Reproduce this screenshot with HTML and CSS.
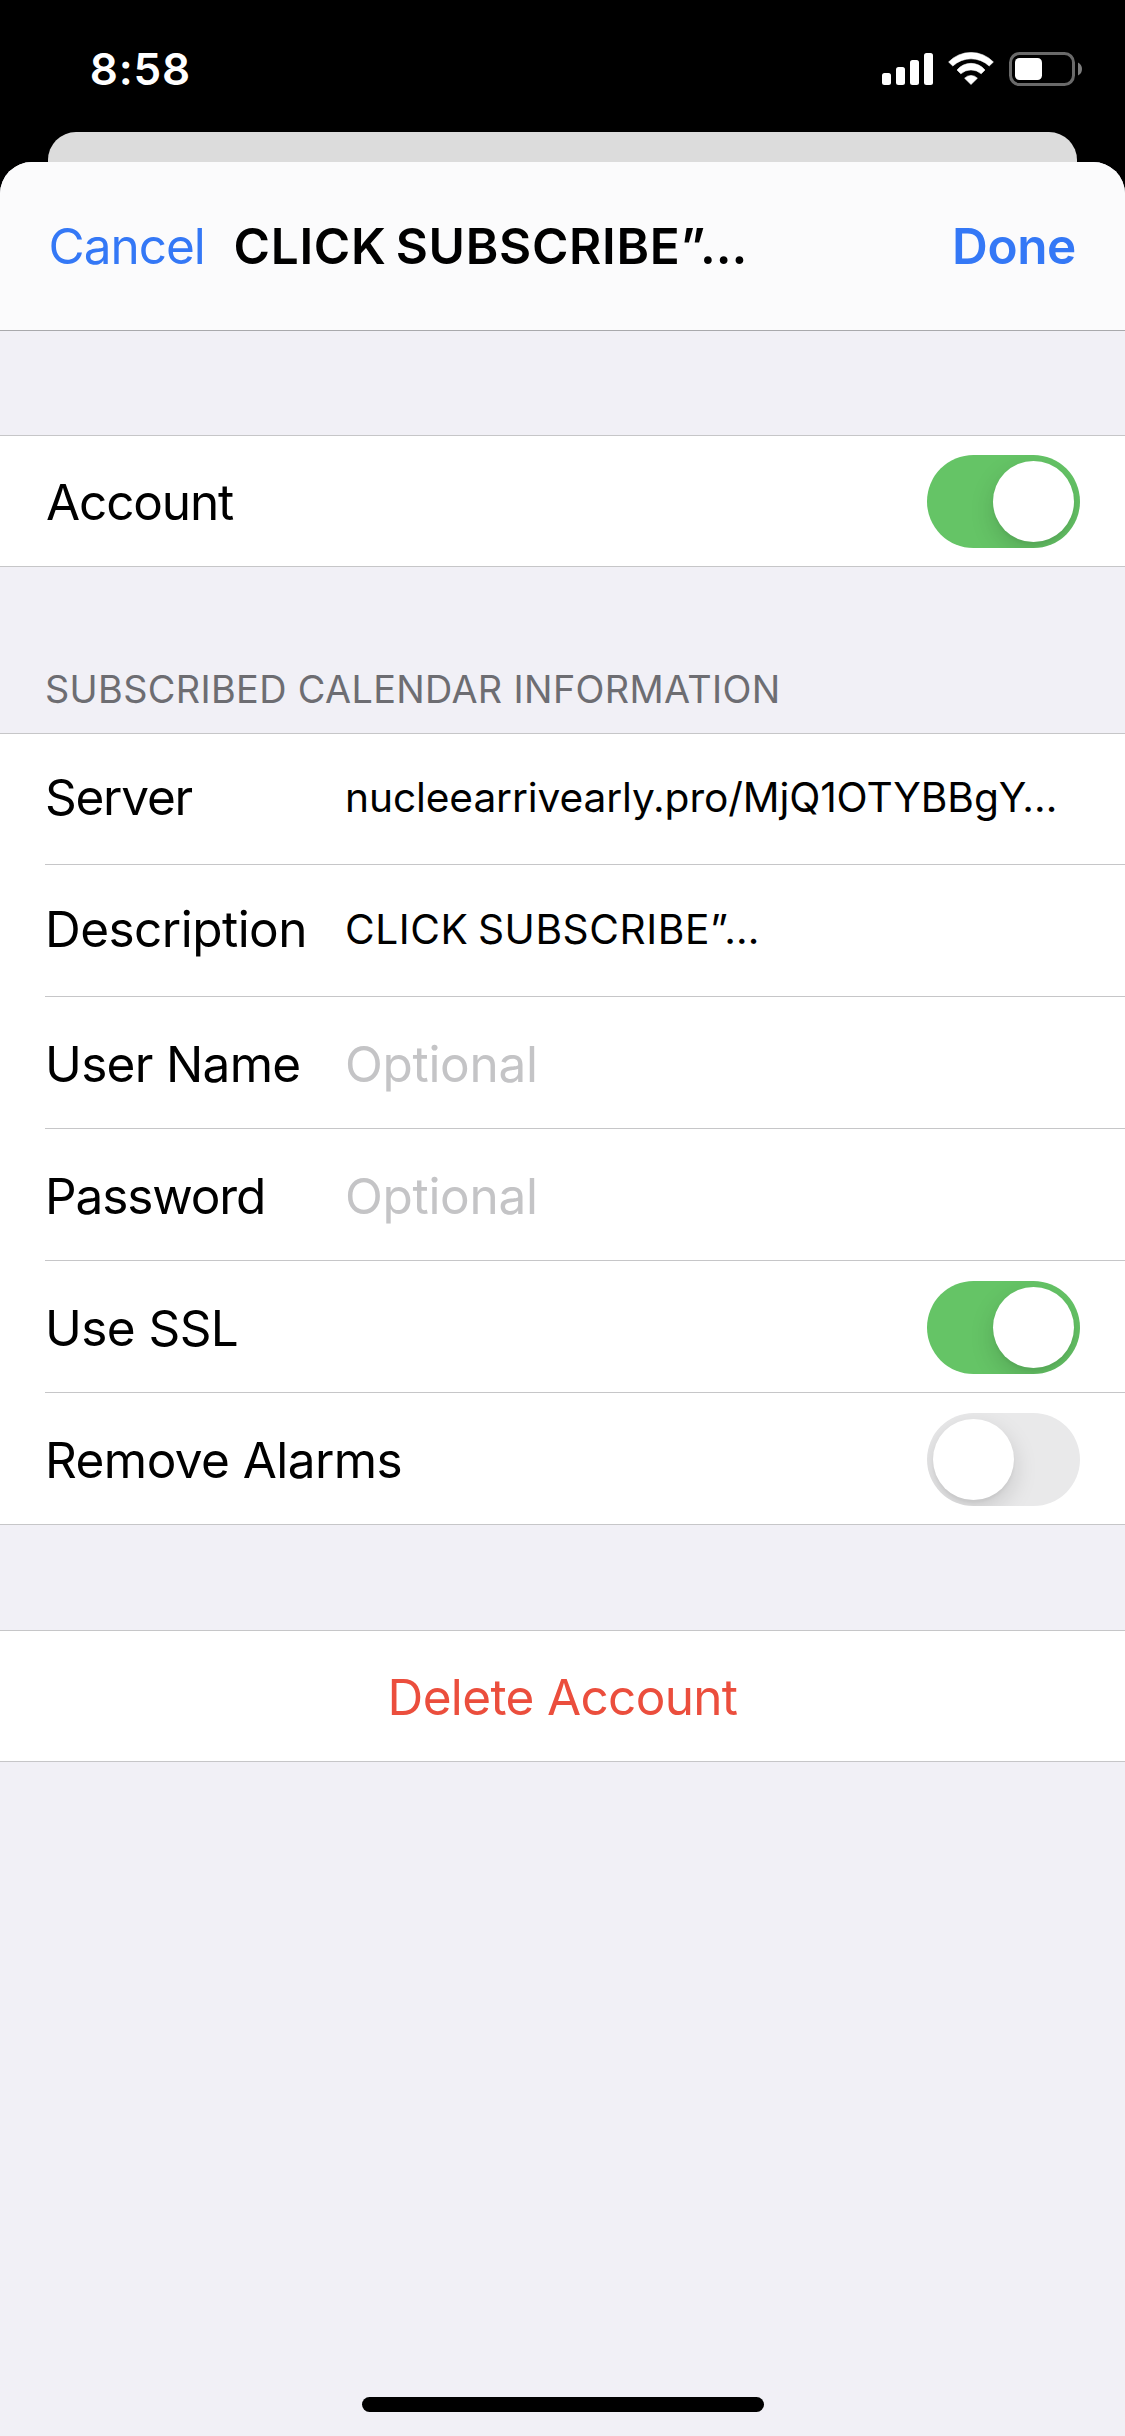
FILE: index.html
```
<!DOCTYPE html>
<html lang="en">
<head>
<meta charset="utf-8">
<title>Subscribed Calendar</title>
<link rel="stylesheet" href="styles.css">
</head>
<body>
<div class="status">
  <span class="clock">8:58</span>
  <div class="indicators">
    <svg class="signal" width="51" height="32" viewBox="0 0 51 32" fill="#fff">
      <rect x="0" y="20" width="9" height="12" rx="2.5"/>
      <rect x="14" y="14" width="9" height="18" rx="2.5"/>
      <rect x="28" y="7" width="9" height="25" rx="2.5"/>
      <rect x="42" y="0" width="9" height="32" rx="2.5"/>
    </svg>
    <svg class="wifi" width="46" height="33" viewBox="0 0 46 33" fill="#fff" stroke="#fff" stroke-width=".6" stroke-linejoin="round">
      <path d="M.6 10A31 31 0 0 1 45.4 10L41.2 14A26.6 26.6 0 0 0 4.8 14Z"/>
      <path d="M9 18A18.1 18.1 0 0 1 37 18L33.2 21.8A15.3 15.3 0 0 0 12.8 21.8Z"/>
      <path d="M16.6 26.2A8.8 8.8 0 0 1 29.4 26.2L23 32.5Z"/>
    </svg>
    <svg class="battery" width="73" height="34" viewBox="0 0 73 34">
      <rect x="1.5" y="1.5" width="63" height="31" rx="9" fill="none" stroke="#6a6a6a" stroke-width="3"/>
      <rect x="6" y="6" width="27" height="22" rx="4.5" fill="#fff"/>
      <path d="M69 10.5Q73 12.5 73 17T69 23.500Z" fill="#7d7d7d"/>
    </svg>
  </div>
</div>
<div class="back-card"></div>
<main class="sheet">
  <header class="nav">
    <span class="cancel">Cancel</span>
    <h1 class="title">CLICK SUBSCRIBE”…</h1>
    <span class="done">Done</span>
  </header>

  <section class="group account-group">
    <div class="row">
      <span class="label tight">Account</span>
      <span class="toggle on"><span class="knob"></span></span>
    </div>
  </section>

  <h2 class="caption">SUBSCRIBED CALENDAR INFORMATION</h2>
  <section class="group">
    <div class="row">
      <span class="label server">Server</span>
      <span class="value url">nucleearrivearly.pro/MjQ1OTYBBgY…</span>
    </div>
    <div class="row">
      <span class="label description">Description</span>
      <span class="value name">CLICK SUBSCRIBE”…</span>
    </div>
    <div class="row">
      <span class="label user">User Name</span>
      <span class="placeholder">Optional</span>
    </div>
    <div class="row">
      <span class="label password">Password</span>
      <span class="placeholder">Optional</span>
    </div>
    <div class="row">
      <span class="label">Use SSL</span>
      <span class="toggle on"><span class="knob"></span></span>
    </div>
    <div class="row">
      <span class="label">Remove Alarms</span>
      <span class="toggle"><span class="knob"></span></span>
    </div>
  </section>

  <section class="group delete-group">
    <div class="row">
      <span class="label delete">Delete Account</span>
    </div>
  </section>
  <div class="home-bar"></div>
</main>
</body>
</html>
```
FILE: styles.css
```
* { box-sizing: border-box; }

body {
  margin: 0;
  width: 1125px;
  height: 2436px;
  display: flex;
  flex-direction: column;
  overflow: hidden;
  background: #000;
  color: #000;
  font-family: Inter, "Liberation Sans", sans-serif;
  font-size: 49.5px;
  white-space: nowrap;
}

h1, h2 { margin: 0; font-size: inherit; }

/* Status bar */
.status {
  flex: none;
  height: 132px;
  padding: 0 43px 0 89.7px;
  display: flex;
  justify-content: space-between;
  align-items: flex-start;
  color: #fff;
}
.clock {
  padding-top: 42px;
  font-size: 44px;
  font-weight: 600;
  line-height: 54px;
  letter-spacing: .8px;
}
.indicators {
  display: flex;
  align-items: flex-start;
  padding-top: 52px;
}
.indicators svg { display: block; }
.signal { margin: 1px 15px 0 0; }
.wifi { margin-right: 15px; }

/* Sheets */
.back-card {
  flex: none;
  height: 30px;
  margin: 0 48px;
  border-radius: 28px 28px 0 0;
  background: #dcdcdc;
}
.sheet {
  flex: 1;
  display: flex;
  flex-direction: column;
  border-radius: 32px 32px 0 0;
  background: #f1f0f6;
  overflow: hidden;
}
.nav {
  flex: none;
  height: 169px;
  padding: 35px 49px 0 48.5px;
  display: flex;
  align-items: flex-start;
  background: #fbfbfc;
  border-bottom: 1px solid #a9a9ac;
  line-height: 98px;
}
.cancel { color: #3478f6; letter-spacing: -1.01px; }
.title { margin-left: 28.8px; font-weight: 600; letter-spacing: .7px; word-spacing: -4px; }
.done { margin-left: auto; color: #3478f6; font-weight: 600; letter-spacing: -.39px; }

/* Grouped list */
.group {
  flex: none;
  background: #fff;
  border-top: 1px solid #c6c6c8;
}
.account-group { margin-top: 104px; }
.delete-group { margin-top: 105px; }
.row {
  height: 132px;
  margin-left: 45px;
  padding: 20px 45px 0 0;
  display: flex;
  align-items: flex-start;
  border-bottom: 1px solid #c6c6c8;
  line-height: 95px;
}
.row:first-child { height: 131px; padding-top: 19px; }
.row:last-child { margin-left: 0; padding-left: 45px; }

.caption {
  height: 166px;
  padding: 91px 45px 0;
  color: #6d6d72;
  font-size: 37.8px;
  font-weight: 400;
  line-height: 62px;
  letter-spacing: .36px;
}

.label { width: 300px; letter-spacing: -.57px; }
.tight { padding-left: 1px; letter-spacing: -1.15px; }
.server { letter-spacing: -1.25px; line-height: 88px; }
.description { letter-spacing: -.53px; line-height: 89px; }
.user { letter-spacing: -.69px; }
.password { letter-spacing: -1.12px; }
.delete {
  width: 100%;
  text-align: center;
  color: #eb4e3d;
  letter-spacing: -.66px;
}

.value { font-size: 40.7px; }
.url { line-height: 90px; letter-spacing: -.11px; }
.name { line-height: 89px; letter-spacing: .55px; word-spacing: -2.5px; }
.placeholder { color: #c4c4c6; letter-spacing: -.31px; }

.toggle {
  width: 153px;
  height: 93px;
  margin-left: auto;
  padding: 6px;
  display: flex;
  border-radius: 47px;
  background: #e9e9ea;
  overflow: hidden;
}
.toggle.on { justify-content: flex-end; background: #65c466; }
.knob {
  width: 81px;
  height: 81px;
  border-radius: 50%;
  background: #fff;
  box-shadow: 0 9px 24px rgba(0, 0, 0, .15), 0 3px 3px rgba(0, 0, 0, .04);
}

.home-bar {
  width: 402px;
  height: 15px;
  margin: auto auto 24px 362px;
  border-radius: 8px;
  background: #000;
}
```
